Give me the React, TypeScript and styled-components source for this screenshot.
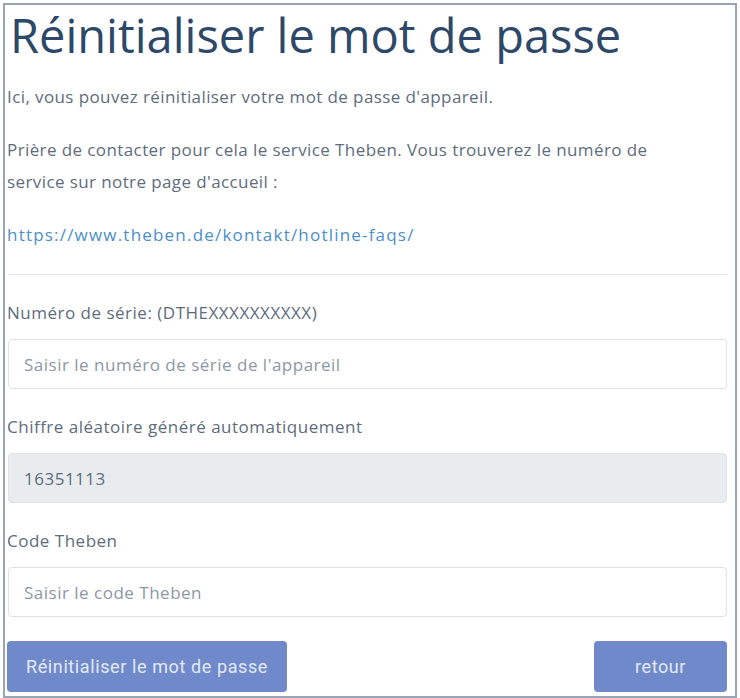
import styled, { createGlobalStyle } from "styled-components";

const GlobalStyle = createGlobalStyle`
    html, body {
        margin: 0;
        padding: 0;
        background: #ffffff;
    }
    body {
        font-family: "Open Sans", "Noto Sans", sans-serif;
    }
`;

const Card = styled.div`
    box-sizing: border-box;
    margin: 3px 3px 0 3px;
    height: 695px;
    border: 2px solid #97a5b6;
    padding: 0 8px 0 2px;
    display: flex;
    flex-direction: column;
`;

const Title = styled.h1`
    margin: 4px 0 0 0;
    padding-left: 3px;
    font-size: 47px;
    line-height: 52px;
    font-weight: 400;
    color: #2d4868;
`;

const Paragraph = styled.p<{ $first?: boolean }>`
    margin: ${(p) => (p.$first ? "20px" : "0")} 0 21px 0;
    max-width: 690px;
    font-size: 17px;
    letter-spacing: 0.4px;
    line-height: 32px;
    color: #5e6d7d;
`;

const Link = styled.a`
    color: #4a8fca;
    text-decoration: none;
    letter-spacing: 1.2px;
`;

const Divider = styled.hr`
    border: none;
    border-top: 1px solid #e3e5e8;
    margin: 2px 0 0 2px;
`;

const Field = styled.div<{ $gap: number }>`
    display: flex;
    flex-direction: column;
    padding-left: 1px;
    margin-top: ${(p) => p.$gap}px;
`;

const Label = styled.label`
    font-size: 17px;
    letter-spacing: 0.5px;
    line-height: 32px;
    color: #5e6d7d;
    margin: 0 0 10px -1px;
`;

const Input = styled.input<{ $disabled?: boolean }>`
    box-sizing: border-box;
    height: 50px;
    padding: 0 15px;
    border: 1px solid #dfe2e6;
    border-radius: 4px;
    font-family: inherit;
    font-size: 17px;
    letter-spacing: 0.5px;
    color: #5e6d7d;
    background: ${(p) => (p.$disabled ? "#e9ecef" : "#ffffff")};
    outline: none;

    &::placeholder {
        color: #8d98a4;
    }
`;

const Actions = styled.div`
    display: flex;
    justify-content: space-between;
    margin-top: 24px;
    padding-left: 0;
`;

const Button = styled.button<{ $wide?: boolean }>`
    height: 51px;
    width: ${(p) => (p.$wide ? "280px" : "133px")};
    border: none;
    border-radius: 4px;
    background: #6f89cb;
    color: #e4e9f6;
    font-family: "Roboto", "Liberation Sans", sans-serif;
    font-size: 18px;
    letter-spacing: 0.6px;
`;

export default function App() {
    return (
        <>
            <GlobalStyle />
            <Card>
                <Title>Réinitialiser le mot de passe</Title>
                <Paragraph $first>
                    Ici, vous pouvez réinitialiser votre mot de passe d'appareil.
                </Paragraph>
                <Paragraph>
                    Prière de contacter pour cela le service Theben. Vous trouverez le numéro de
                    service sur notre page d'accueil :
                </Paragraph>
                <Paragraph>
                    <Link href="#">https://www.theben.de/kontakt/hotline-faqs/</Link>
                </Paragraph>
                <Divider />
                <Field $gap={22}>
                    <Label>Numéro de série: (DTHEXXXXXXXXXX)</Label>
                    <Input placeholder="Saisir le numéro de série de l'appareil" />
                </Field>
                <Field $gap={22}>
                    <Label>Chiffre aléatoire généré automatiquement</Label>
                    <Input $disabled readOnly value="16351113" />
                </Field>
                <Field $gap={22}>
                    <Label>Code Theben</Label>
                    <Input placeholder="Saisir le code Theben" />
                </Field>
                <Actions>
                    <Button $wide>Réinitialiser le mot de passe</Button>
                    <Button>retour</Button>
                </Actions>
            </Card>
        </>
    );
}
